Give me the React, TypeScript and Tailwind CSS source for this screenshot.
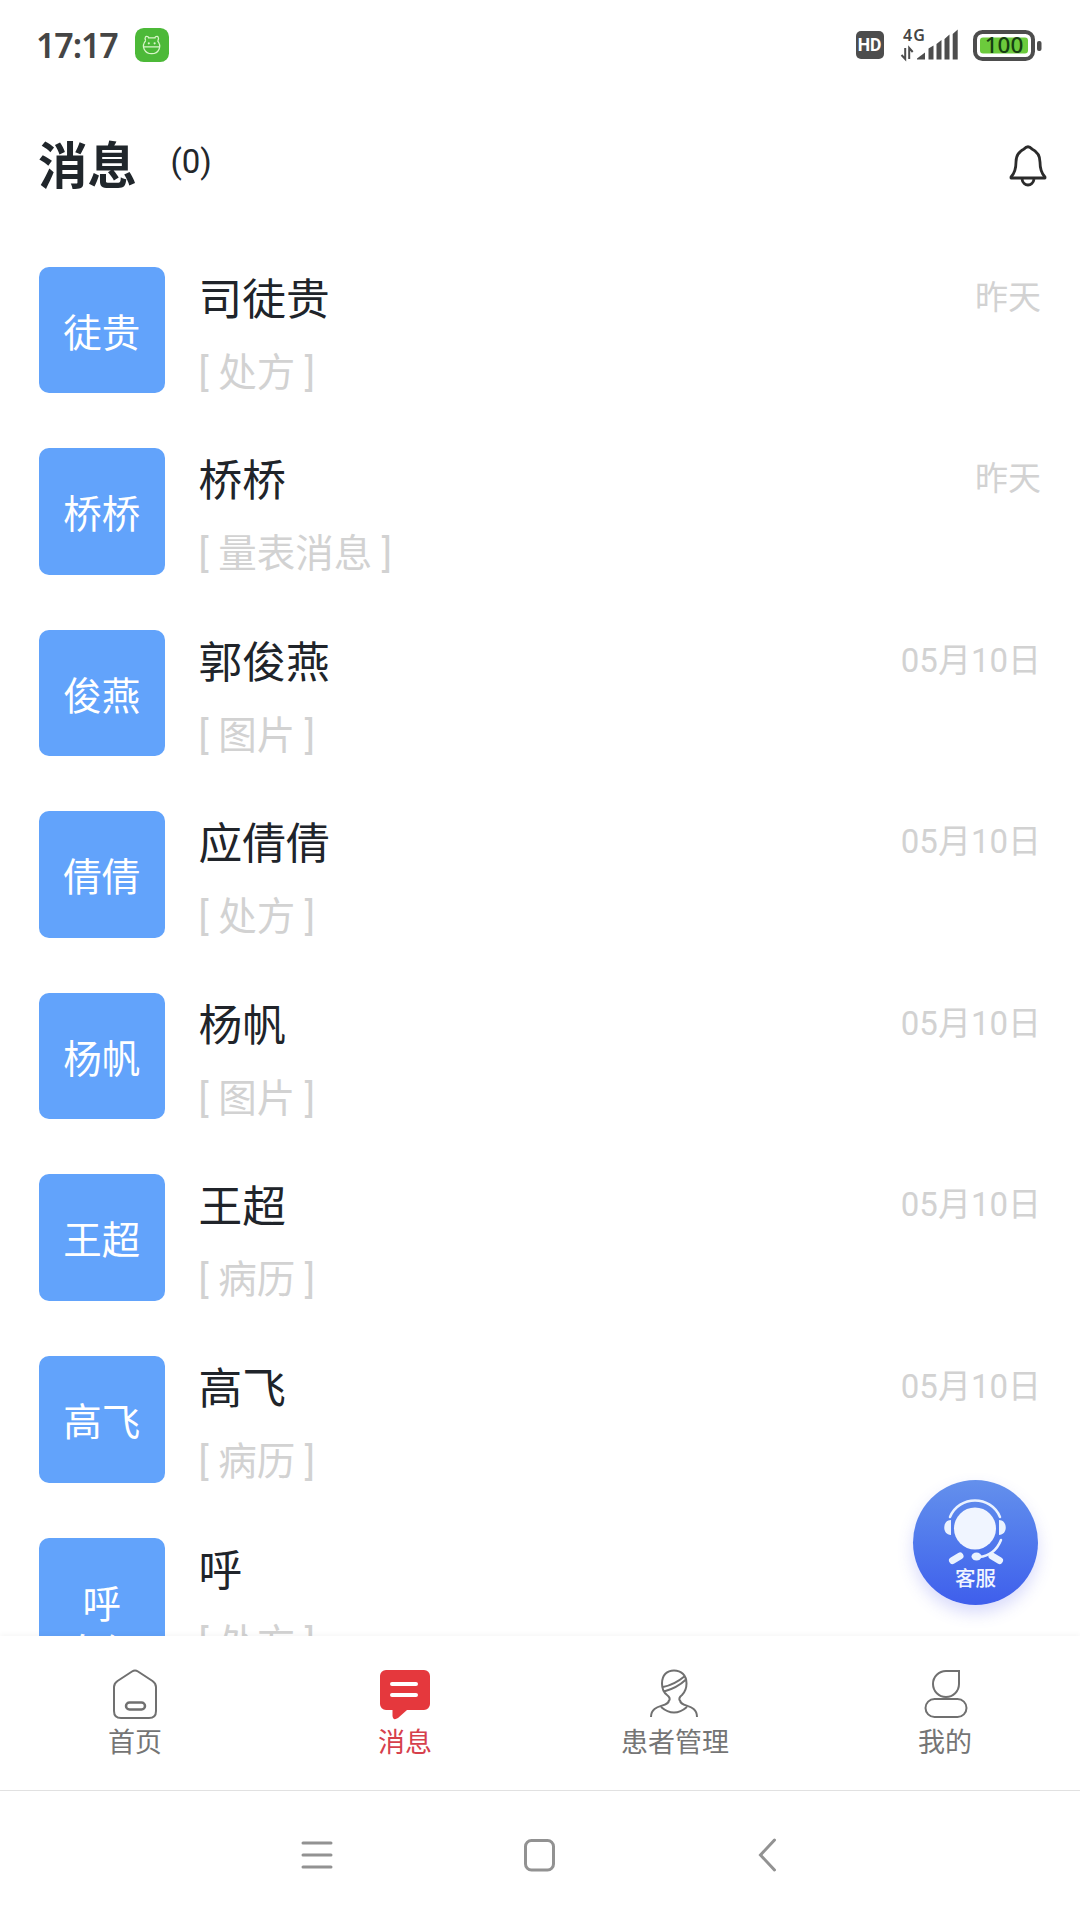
import type { ReactNode } from "react";

type Message = {
  avatar: string[];
  name: string;
  preview: string;
  date: string;
};

const messages: Message[] = [
  { avatar: ["徒贵"], name: "司徒贵", preview: "处方", date: "昨天" },
  { avatar: ["桥桥"], name: "桥桥", preview: "量表消息", date: "昨天" },
  { avatar: ["俊燕"], name: "郭俊燕", preview: "图片", date: "05月10日" },
  { avatar: ["倩倩"], name: "应倩倩", preview: "处方", date: "05月10日" },
  { avatar: ["杨帆"], name: "杨帆", preview: "图片", date: "05月10日" },
  { avatar: ["王超"], name: "王超", preview: "病历", date: "05月10日" },
  { avatar: ["高飞"], name: "高飞", preview: "病历", date: "05月10日" },
  { avatar: ["呼", "息红"], name: "呼", preview: "处方", date: "" },
];

function StatusBar() {
  return (
    <div className="flex h-[90px] shrink-0 items-center pl-9 pr-[38.500px] text-[#454545]">
      <span className="w-[99px] font-['Noto_Sans','Noto_Sans_CJK_SC',sans-serif] text-[34px] font-semibold leading-none tracking-[-1.1px]">
        17:17
      </span>
      <svg width="34" height="34" viewBox="0 0 35 35" fill="none">
        <rect width="35" height="35" rx="9" fill="#4cb938" />
        <g stroke="#d9f5c9" strokeWidth="1.3">
          <path d="M11 13c-1.600-3 .2-5.600 2.400-4 .4.3.6.9.6 1.100h6.600c0-.2.2-.8.6-1.100 2.200-1.600 4 1 2.400 4" />
          <path d="M11 13c-5 5.600-1.200 13.500 6.200 13.500s10.800-7.900 5.900-13.500M9 19.500h16.500" />
        </g>
        <circle cx="14.200" cy="15.800" r="1.100" fill="#d9f5c9" />
        <circle cx="20.200" cy="15.800" r="1.100" fill="#d9f5c9" />
      </svg>
      <div className="ml-auto flex items-center">
        <span className="flex h-7 w-7 items-center justify-center rounded-[5px] bg-[#4d4d4d] font-['Roboto',sans-serif] text-[17.500px] font-bold leading-7 text-white">
          HD
        </span>
        <svg className="ml-[17px] overflow-visible" width="60" height="34" viewBox="0 0 60 34">
          <text x="2" y="12.500" fontSize="16" fontWeight="600" fill="#454545" fontFamily="Noto Sans, sans-serif" letterSpacing="1">4G</text>
          <g fill="none" stroke="#4d4d4d" strokeWidth="2">
            <path d="M4.200 20v11L.5 27M8.200 31V20l3.500 4" />
          </g>
          <g fill="#4d4d4d">
            <path d="M16 31.500v-1l8-6v7z" />
            <path d="M27.500 20.500l5-3v14h-5zM35.500 16l5-4v19.500h-5zM43.500 11l5-4.500v25h-5zM51.700 6l5-4.500v30h-5z" />
          </g>
        </svg>
        <svg className="ml-3" width="69" height="31" viewBox="0 0 69 31">
          <rect x="2" y="2" width="58" height="27" rx="7.500" fill="none" stroke="#4d4d4d" strokeWidth="4" />
          <rect x="7" y="7.500" width="48" height="16" rx="3" fill="#6ccb3c" />
          <rect x="64" y="11" width="4.500" height="10" rx="2" fill="#4d4d4d" />
          <text x="31" y="23" textAnchor="middle" fontSize="22.500" fontWeight="500" fill="#163f12" fontFamily="Noto Sans, sans-serif">100</text>
        </svg>
      </div>
    </div>
  );
}

function MessageRow({ avatar, name, preview, date }: Message) {
  return (
    <li className="flex h-[181.600px] shrink-0 items-start">
      <div className="h-[126.500px] w-[126.500px] shrink-0 overflow-hidden rounded-[10px] bg-[#62a3fb] pt-[42px] text-center text-[38.500px] leading-[49px] text-white">
        {avatar.map((line) => (
          <div key={line}>{line}</div>
        ))}
      </div>
      <div className="ml-[33.500px] flex-1 pt-px">
        <div className="text-[43.700px] leading-[64px] text-[#20242a]">{name}</div>
        <div className="mt-3 text-[38.500px] leading-[58px] text-[#d2d2d2]">[ {preview} ]</div>
      </div>
      <div className="pt-[7px] text-[33px] leading-[48px] text-[#d2d2d2]">{date}</div>
    </li>
  );
}

function ServiceButton() {
  return (
    <button className="absolute bottom-[31px] right-[42px] h-[125px] w-[125px] rounded-full bg-linear-to-b from-[#6490ec] to-[#3f5eec] shadow-[0_8px_16px_rgba(80,90,235,0.22)]">
      <svg width="125" height="125" viewBox="0 0 125 125" fill="none">
        <circle cx="62" cy="48.500" r="21" fill="#f0f5ff" />
        <path d="M37 37C46 15 78 15 87 37" stroke="#eaf2ff" strokeWidth="2.500" strokeLinecap="round" />
        <path d="M88 60C84 70 76 76 66 77" stroke="#eaf2ff" strokeWidth="2.500" strokeLinecap="round" />
        <path d="M38 40v15c-9 0-9-15 0-15zM86 40v15c9 0 9-15 0-15z" fill="#eaf2ff" />
        <ellipse cx="63.500" cy="76.500" rx="5" ry="4" fill="#eaf2ff" />
        <path d="M39.500 80.500l7.500-4.500M86.500 80.500l-7.500-4.500" stroke="#eaf2ff" strokeWidth="7" strokeLinecap="round" />
        <text x="62.500" y="106" textAnchor="middle" fontSize="20.500" fontWeight="500" fill="#f0f5ff" fontFamily="Noto Sans CJK SC, sans-serif">客服</text>
      </svg>
    </button>
  );
}

function Tab({ label, active, children }: { label: string; active?: boolean; children: ReactNode }) {
  return (
    <div className={`flex flex-1 flex-col items-center pt-[33px] ${active ? "text-[#d6404c]" : "text-[#757575]"}`}>
      <svg width="52" height="52" viewBox="0 0 52 52" fill="none" stroke="#707070" strokeWidth="2">
        {children}
      </svg>
      <span className="mt-0.5 text-[27px] leading-10">{label}</span>
    </div>
  );
}

function TabBar() {
  return (
    <nav className="relative flex h-[154px] shrink-0 bg-white shadow-[0_-2px_5px_rgba(0,0,0,0.035)]">
      <Tab label="首页">
        <path d="M23 2.500Q26 .5 29 2.500L43.500 12Q47 14.500 47 18V42Q47 49 40 49H12Q5 49 5 42V18Q5 14.500 8.500 12Z" />
        <rect x="17" y="33.500" width="19" height="7" rx="3.500" strokeWidth="2.500" />
      </Tab>
      <Tab label="消息" active>
        <path d="M7 1H45a6 6 0 0 1 6 6V35a6 6 0 0 1-6 6H28L19 49Q14 52 13.500 47V41H7a6 6 0 0 1-6-6V7a6 6 0 0 1 6-6Z" fill="#e5383d" stroke="none" />
        <path d="M13 15H37M13 26H37" stroke="#fff" strokeWidth="4" strokeLinecap="round" />
      </Tab>
      <Tab label="患者管理">
        <path d="M20 32Q22 29 18 26C14 23 13 19 13 14.500C13 6 18 1.500 25 1.500S37.500 6 37.500 14.500C37.500 20 36 23 33 26Q29 29 31 32M14 18Q25 16 36 7M15 22.500Q28 19 37 10.500" />
        <path d="M20 31C20 39 2 34 2 48M31 31C31 39 48 34 48 48M12 38Q25 49 38 38" />
      </Tab>
      <Tab label="我的">
        <path d="M27 2H40V15A13 13 0 1 1 27 2Z" />
        <rect x="6.500" y="30" width="41" height="18" rx="9" />
      </Tab>
    </nav>
  );
}

function SystemNav() {
  return (
    <div className="flex h-[130px] shrink-0 items-center border-t border-[#e2e2e2] pb-0.5 pl-[301px]">
      <svg width="32" height="34" viewBox="0 0 32 34" fill="none" stroke="#929292" strokeWidth="3" strokeLinecap="round">
        <path d="M2 5H30M2 17H30M2 29H30" />
      </svg>
      <svg className="ml-[190px]" width="32" height="34" viewBox="0 0 32 34" fill="none" stroke="#929292" strokeWidth="3">
        <rect x="2.500" y="2.500" width="28" height="29.500" rx="6" />
      </svg>
      <svg className="ml-[203px]" width="20" height="34" viewBox="0 0 20 34" fill="none" stroke="#929292" strokeWidth="3" strokeLinecap="round">
        <path d="M16.500 2L2.500 17L16.500 32" />
      </svg>
    </div>
  );
}

export default function App() {
  return (
    <div className="flex h-[1920px] w-[1080px] flex-col overflow-hidden bg-white font-['Roboto','Noto_Sans_CJK_SC',sans-serif]">
      <StatusBar />
      <header className="flex h-[176.500px] shrink-0 items-start pl-[38px] pr-[33px] pt-[38px]">
        <h1 className="pt-[2px] text-[49.500px] font-bold leading-[74px] text-[#20262b]">消息</h1>
        <span className="ml-[33.500px] text-[33px] leading-[68px] text-[#23272b]">(0)</span>
        <svg className="ml-auto mt-[16.500px]" width="38" height="42" viewBox="0 0 38 42" fill="none" stroke="#2b2b2b" strokeWidth="2.800" strokeLinejoin="round">
          <path d="M15 4Q19-.5 23 4Q31 8 31 17Q31 27 36 32V33H2V32Q7 27 7 17Q7 8 15 4Z" />
          <path d="M13 34C14 42 24 42 25 34" />
        </svg>
      </header>
      <main className="relative min-h-0 flex-1">
        <ul className="flex h-full flex-col overflow-hidden pl-[38.500px] pr-[39px]">
          {messages.map((message) => (
            <MessageRow key={message.name} {...message} />
          ))}
        </ul>
        <ServiceButton />
      </main>
      <TabBar />
      <SystemNav />
    </div>
  );
}
